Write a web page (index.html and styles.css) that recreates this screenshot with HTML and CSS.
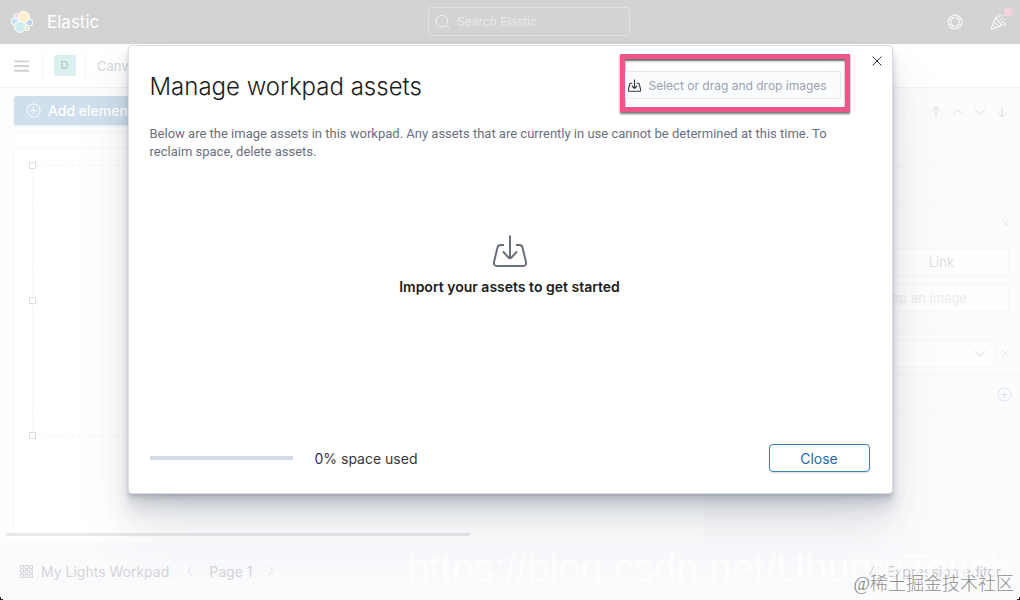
FILE: index.html
```html
<!DOCTYPE html>
<html lang="en">
<head>
<meta charset="utf-8">
<title>Manage workpad assets - Elastic</title>
<link rel="stylesheet" href="styles.css">
</head>
<body>
<svg class="sprite" aria-hidden="true">
  <symbol id="import" viewBox="0 0 34 32"><path d="M11 10H7.500Q5 10 4.500 12.500L1 27Q.5 31 4 31H30Q33.500 31 33 27L29.500 12.500Q29 10 26.500 10H23M17 .5V23M10 16.500l5.500 6q1.500 1.500 3 0l5.500-6"/></symbol>
  <symbol id="cross" viewBox="0 0 10 10"><path d="M.5.5l9 9M9.500.5l-9 9"/></symbol>
  <symbol id="plus" viewBox="0 0 16 16"><circle cx="8" cy="8" r="7"/><path d="M8 4v8M4 8h8"/></symbol>
  <symbol id="up" viewBox="0 0 12 12"><path d="M6 11V1M1.500 5.500L6 1l4.500 4.500"/></symbol>
  <symbol id="chevron" viewBox="0 0 12 12"><path d="M1 3.500l4.500 4.200q.5.500 1 0L11 3.500"/></symbol>
</svg>

<div class="app">
  <header class="topbar">
    <a class="brand" href="#">
      <svg class="logo" viewBox="0 0 22 22">
        <circle cx="5.500" cy="4.800" r="2.400" fill="#f6c9df"/>
        <circle cx="3.600" cy="10.500" r="3.600" fill="#c8dff7"/>
        <circle cx="18.400" cy="11.500" r="3.500" fill="#bfd2ec"/>
        <circle cx="15.800" cy="17" r="2.600" fill="#e1e9c4"/>
        <circle cx="12.700" cy="6" r="5.600" fill="#fdf0d0"/>
        <circle cx="9" cy="15.800" r="5.600" fill="#d0efec"/>
      </svg>
      <span>Elastic</span>
    </a>
    <label class="search">
      <svg viewBox="0 0 16 16"><path d="M10.500 13.200A6.300 6.300 0 1 1 13 10.500M11.500 11.500L15 15"/></svg>
      <input type="search" placeholder="Search Elastic" aria-label="Search Elastic">
    </label>
    <div class="topbar-actions">
      <button class="icon-button" aria-label="Help"><svg viewBox="0 0 16 16"><circle cx="8" cy="8" r="7"/><circle cx="8" cy="8" r="4.300"/><path d="M4.500 2l1.200 2.400M11.500 2l-1.200 2.400M14 4.500l-2.400 1.200M14 11.500l-2.400-1.200M11.500 14l-1.200-2.400M4.500 14l1.200-2.400M2 11.500l2.400-1.200M2 4.500l2.400 1.200"/></svg></button>
      <button class="icon-button news" aria-label="News"><svg viewBox="0 0 16 16"><path d="M5.500 3.500L1 14.500q0 1 1 .5l10-3.500zM4 7.500l5 5.200M2.500 11l3 2.800M6.500 2.500q-1 1 1.500 4.500t5 4.500M8 4q2-1 .5-3.500M10 6.500q2-3 3-2.500M11 8.500q3-2 4 .5t-1 2.500M11 1.500h1M14.500 1.500h1M14.500 5.500h1"/></svg><span class="dot"></span></button>
    </div>
  </header>

  <nav class="navbar">
    <button class="menu" aria-label="Menu"><svg viewBox="0 0 16 12"><path d="M0 1h16M0 6h16M0 11h16"/></svg></button>
    <div class="space"><span>D</span></div>
    <a class="crumb" href="#">Canvas</a>
  </nav>

  <main class="work">
    <section class="editor">
      <div class="tools"><button class="add"><svg><use href="#plus"/></svg>Add element</button></div>
      <div class="stage">
        <div class="page">
          <div class="selection">
            <i class="handle top"></i><i class="handle middle"></i><i class="handle bottom"></i>
          </div>
        </div>
        <div class="scrollbar"></div>
      </div>
    </section>
    <aside class="sidebar">
      <div class="order">
        <button class="icon-button" aria-label="Move to front"><svg><use href="#up"/></svg></button>
        <button class="icon-button" aria-label="Move forward"><svg class="flip"><use href="#chevron"/></svg></button>
        <button class="icon-button" aria-label="Move backward"><svg><use href="#chevron"/></svg></button>
        <button class="icon-button" aria-label="Move to back"><svg class="flip"><use href="#up"/></svg></button>
      </div>
      <div class="tabs"></div>
      <div class="image-options">
        <div class="remove-row"><button class="icon-button small" aria-label="Remove image"><svg><use href="#cross"/></svg></button></div>
        <button class="field link">Link</button>
        <button class="field drop">Select or drag and drop an image</button>
      </div>
      <div class="select-row">
        <button class="field picker" aria-label="Image fit"><svg><use href="#chevron"/></svg></button>
        <button class="icon-button small" aria-label="Remove fit"><svg><use href="#cross"/></svg></button>
      </div>
      <div class="style-row"><button class="icon-button add-style" aria-label="Add style"><svg><use href="#plus"/></svg></button></div>
    </aside>
  </main>

  <footer class="bottombar">
    <button class="workpad"><svg viewBox="0 0 13 13"><path d="M.5.5h3v3h-3zM5 .5h3v3H5zM9.500.5h3v3h-3zM.5 5h3v3h-3zM5 5h3v3H5zM9.500 5h3v3h-3zM.5 9.500h3v3h-3zM5 9.500h3v3H5zM9.500 9.500h3v3h-3z"/></svg>My Lights Workpad</button>
    <button class="icon-button pager" aria-label="Previous page"><svg class="to-left"><use href="#chevron"/></svg></button>
    <span class="page-label">Page 1</span>
    <button class="icon-button pager" aria-label="Next page"><svg class="to-right"><use href="#chevron"/></svg></button>
    <button class="expression"><svg viewBox="0 0 12 12"><path d="M0 11L5 1M5 11L10 1"/></svg>Expression editor</button>
  </footer>
</div>

<div class="overlay">
  <section class="modal" role="dialog" aria-labelledby="modal-title">
    <button class="dismiss" aria-label="Close dialog"><svg><use href="#cross"/></svg></button>
    <div class="modal-head">
      <h1 id="modal-title">Manage workpad assets</h1>
      <div class="highlight">
        <label class="upload"><svg><use href="#import"/></svg><span>Select or drag and drop images</span><input type="file" accept="image/*" multiple></label>
      </div>
    </div>
    <p class="intro">Below are the image assets in this workpad. Any assets that are currently in use cannot be determined at this time. To reclaim space, delete assets.</p>
    <div class="empty">
      <svg><use href="#import"/></svg>
      <h2>Import your assets to get started</h2>
    </div>
    <div class="modal-foot">
      <progress id="used" value="0" max="100"></progress>
      <label for="used">0% space used</label>
      <button class="close">Close</button>
    </div>
  </section>
</div>

<div class="watermark-url">https://blog.csdn.net/UbuntuTouch</div>
<div class="watermark-name">@稀土掘金技术社区</div>
<i class="corner left"></i><i class="corner right"></i>
</body>
</html>
```

FILE: styles.css
```css
* { box-sizing: border-box; }

body {
  margin: 0;
  height: 100vh;
  overflow: hidden;
  position: relative;
  font-family: Inter, "Liberation Sans", "Noto Sans CJK SC", sans-serif;
  font-size: 14px;
  color: #343741;
  background: #fff;
}

.sprite { position: absolute; width: 0; height: 0; }
svg { fill: none; stroke: currentColor; stroke-width: 1; flex: none; display: block; }
button { font: inherit; color: inherit; background: none; border: 0; padding: 0; }
a { color: inherit; text-decoration: none; }

.app { height: 100%; display: flex; flex-direction: column; }

/* Top bar */
.topbar {
  height: 44px;
  flex: none;
  display: grid;
  grid-template-columns: 1fr 202px 376px;
  align-items: center;
  padding: 0 14px 1px 11px;
  background: #d3d3d3;
  color: #fff;
}
.brand { display: flex; align-items: center; gap: 14px; font-size: 17px; }
.logo { width: 22px; height: 22px; stroke: #fff; }
.search {
  height: 29px;
  display: flex;
  align-items: center;
  gap: 7px;
  padding: 0 6px;
  border: 1px solid #e0e0e0;
  border-radius: 2px;
  color: #f4f4f4;
}
.search svg { width: 15px; height: 15px; }
.search input { flex: 1; min-width: 0; border: 0; padding: 0; background: none; font: inherit; font-size: 12px; outline: 0; }
.search input::placeholder { color: #e8e8e8; opacity: 1; }
.topbar-actions { display: flex; justify-content: flex-end; gap: 27px; }
.icon-button { display: flex; align-items: center; justify-content: center; }
.icon-button svg { width: 12px; height: 12px; }
.topbar-actions svg { width: 16px; height: 16px; }
.news { position: relative; }
.dot { position: absolute; top: -7px; right: -7px; width: 9px; height: 9px; border-radius: 50%; background: #f5d0df; }

/* Breadcrumb bar */
.navbar {
  height: 44px;
  flex: none;
  display: flex;
  align-items: center;
  border-bottom: 1px solid #f3f4f5;
  box-shadow: 0 1px 1px #f8f8f9;
  color: #cfcfd1;
}
.menu { width: 43px; height: 30px; display: flex; align-items: center; justify-content: center; border-right: 1px solid #f6f6f7; }
.menu svg { width: 15px; height: 12px; stroke: #d2d2d3; stroke-width: 2; }
.space { width: 43px; height: 30px; padding-left: 1px; display: flex; align-items: center; justify-content: center; border-right: 1px solid #f6f6f7; }
.space span { width: 22px; height: 21px; border-radius: 3px; background: #daf0ee; color: #bbc8c7; font-size: 11px; font-weight: 500; line-height: 21px; text-align: center; }
.crumb { margin-left: 11px; font-size: 13px; color: #d8d8da; }

/* Canvas */
.work { flex: 1; min-height: 0; display: grid; grid-template-columns: 1fr 315px; }
.editor { display: flex; flex-direction: column; min-width: 0; }
.tools { height: 45px; flex: none; padding: 8px 14px; border-bottom: 1px solid #f8f8f9; background: #fdfdfe; }
.add { height: 29px; display: flex; align-items: center; gap: 7px; padding: 0 12px; border-radius: 3px; background: #d0dfed; color: #fff; box-shadow: 0 1px 2px #e5ebf1; font-size: 14px; font-weight: 500; }
.add svg { width: 15px; height: 15px; }
.stage { flex: 1; display: flex; flex-direction: column; padding: 15px 6px 6px; background: linear-gradient(to right, #fdfdfd 14px, #fff 14px); }
.page { flex: 1; margin: 0 8px 5px; padding: 16px 10px 0 18px; border-top: 1px solid #fafafa; background: #fff; box-shadow: -1px 0 1px #f8f8f9; }
.selection { position: relative; height: 271px; border: 1px dashed #f5f5f6; }
.handle { position: absolute; left: -4px; width: 7px; height: 7px; border: 1px solid #dedee0; background: #fff; }
.handle.top { top: -4px; }
.handle.middle { top: 131px; }
.handle.bottom { bottom: -4px; }
.scrollbar { width: 67%; height: 3px; flex: none; background: #e7e8ea; }

/* Sidebar */
.sidebar { display: flex; flex-direction: column; border-left: 1px solid #f4f4f6; background: #fcfcfd; color: #dcdcde; }
.order { height: 79px; flex: none; display: flex; justify-content: flex-end; gap: 10px; padding: 18px 12px 0 0; border-bottom: 1px solid #f6f7f8; align-items: flex-start; }
.tabs { height: 37px; flex: none; border-bottom: 1px solid #f6f7f8; }
.image-options { height: 128px; flex: none; padding: 15px 11px 0 12px; border-bottom: 1px solid #f6f7f8; }
.remove-row { height: 29px; padding-top: 1px; }
.small svg { width: 7px; height: 7px; }
.remove-row .small { margin-left: auto; }
.field { display: flex; align-items: center; width: 100%; height: 28px; border: 1px solid #f8f8f9; background: #fefefe; font-size: 13px; }
.link { justify-content: flex-end; padding-right: 54px; color: #dededf; }
.drop { justify-content: flex-end; margin-top: 8px; padding-right: 41px; color: #ececef; }
.select-row { height: 44px; flex: none; display: flex; align-items: center; gap: 7px; padding: 0 11px 0 12px; border-bottom: 1px solid #f6f7f8; }
.picker { flex: 1; justify-content: flex-end; padding-right: 8px; color: #cdced2; }
.picker svg { width: 12px; height: 12px; }
.style-row { height: 37px; flex: none; display: flex; align-items: center; justify-content: flex-end; padding-right: 8px; border-bottom: 1px solid #f6f7f8; color: #d5e3f5; }
.add-style svg { width: 15px; height: 15px; }
.flip { transform: rotate(180deg); }
.to-left { transform: rotate(90deg); }
.to-right { transform: rotate(-90deg); }

/* Bottom bar */
.bottombar { height: 58px; flex: none; display: flex; align-items: center; padding: 0 19px 0 20px; background: #fafbfd; color: #d5d6d9; font-size: 14px; }
.workpad, .expression { display: flex; align-items: center; }
.workpad { gap: 8px; margin-right: 15px; }
.workpad svg { width: 13px; height: 13px; }
.pager { color: #e2e3e6; }
.page-label { margin: 0 13px; }
.expression { margin-left: auto; gap: 5px; color: #c9cacd; }
.expression svg { width: 12px; height: 12px; }

/* Modal */
.overlay { position: absolute; inset: 0; display: flex; align-items: flex-start; justify-content: center; padding-top: 45px; }
.modal {
  position: relative;
  width: 75%;
  min-height: 449px;
  display: flex;
  flex-direction: column;
  padding: 8px 22px 21px 21px;
  border: 1px solid #d9dde5;
  border-radius: 4px;
  background: #fff;
  box-shadow:
    0 36px 58px rgba(65, 78, 101, .10),
    0 22px 29px rgba(65, 78, 101, .10),
    0 14px 14px rgba(65, 78, 101, .10),
    0 7px 7px rgba(65, 78, 101, .10),
    0 4px 4px rgba(65, 78, 101, .10),
    0 2px 2px rgba(65, 78, 101, .10);
}
.dismiss { position: absolute; top: 10px; right: 10px; color: #343741; }
.dismiss svg { width: 10px; height: 10px; }
.modal-head { display: flex; justify-content: space-between; margin-right: 20px; height: 59px; }
h1 { margin: 16px 0 0; font-size: 24px; line-height: 34px; font-weight: 300; color: #1a1c21; }
.highlight { width: 230px; height: 58px; padding: 12px 4px 0 0; border: 5px solid #ed5788; box-shadow: 0 2px 2px #777, inset 0 2px 2px #666; }
.upload { position: relative; height: 28px; display: flex; align-items: center; gap: 8px; padding-left: 3px; border: 1px solid #e5e9f1; border-left: 0; background: #fbfcfd; color: #98a2b3; font-size: 12px; white-space: nowrap; }
.upload svg { width: 13px; height: 13px; color: #343741; stroke-width: 3; overflow: visible; }
.upload input { position: absolute; inset: 0; width: 100%; opacity: 0; }
.intro { margin: 12px 22px 0 0; font-family: Roboto, sans-serif; font-size: 13px; line-height: 18px; color: #69707d; }
.empty { flex: 1; display: flex; flex-direction: column; align-items: center; padding-top: 74px; }
.empty svg { width: 34px; height: 32px; stroke-width: 2; color: #69707d; }
h2 { margin: 9px 0 0; font-size: 14px; line-height: 21px; font-weight: 600; color: #1a1c21; }
.modal-foot { display: flex; align-items: center; font-size: 14px; }
progress { appearance: none; width: 143px; height: 4px; margin-right: 22px; border: 0; background: #d3dae6; }
progress::-webkit-progress-bar { background: #d3dae6; }
.close { width: 101px; height: 28px; margin-left: auto; border: 1px solid #3a80c0; border-radius: 4px; box-shadow: 0 1px 2px #d3dce9; color: #1f69b3; }

/* Marks over the page */
.watermark-url { position: absolute; right: 8px; bottom: 9px; font-family: "Liberation Sans", Arial, sans-serif; font-size: 40px; line-height: 46px; color: rgba(255, 255, 255, .75); pointer-events: none; }
.watermark-name { position: absolute; right: 6px; bottom: 4px; font-family: "Liberation Serif", "Noto Sans CJK SC", serif; font-size: 18px; line-height: 24px; font-weight: 300; color: #8c8c8c; text-shadow: 1px 1px 0 #fff; pointer-events: none; }
.corner { position: absolute; bottom: 0; width: 5px; height: 5px; }
.corner.left { left: 0; background: radial-gradient(circle at 100% 0, transparent 5px, #251a1d 5px); }
.corner.right { right: 0; background: radial-gradient(circle at 0 0, transparent 5px, #251a1d 5px); }
```
